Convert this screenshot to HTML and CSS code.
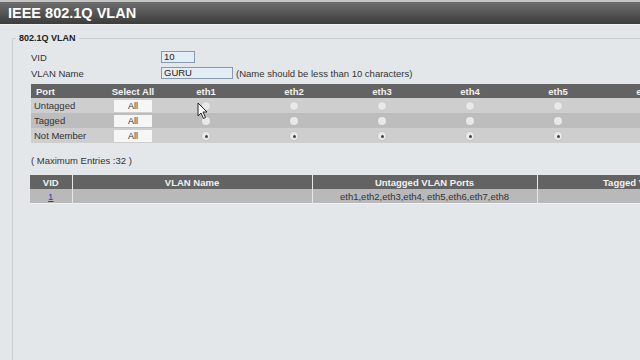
FILE: index.html
```html
<!DOCTYPE html>
<html>
<head>
<meta charset="utf-8">
<link rel="stylesheet" href="styles.css">
</head>
<body>
<div class="titlebar">IEEE 802.1Q VLAN</div>
<div class="content">
  <fieldset class="box">
    <legend>802.1Q VLAN</legend>
    <div class="inner">
    <div class="form">
      <div class="frow"><span class="flabel">VID</span><span class="input vid">10</span></div>
      <div class="frow"><span class="flabel">VLAN Name</span><span class="input name">GURU</span><span class="note">(Name should be less than 10 characters)</span></div>
    </div>
    <table class="ports">
      <colgroup><col class="c-port"><col class="c-sel"><col class="c-eth"><col class="c-eth"><col class="c-eth"><col class="c-eth"><col class="c-eth"><col class="c-eth"><col class="c-eth"><col class="c-eth"></colgroup>
      <thead>
        <tr><th class="lh">Port</th><th>Select All</th><th>eth1</th><th>eth2</th><th>eth3</th><th>eth4</th><th>eth5</th><th>eth6</th><th>eth7</th><th>eth8</th></tr>
      </thead>
      <tbody>
        <tr class="r1"><td class="lbl">Untagged</td><td><span class="btn">All</span></td><td><i class="radio"></i></td><td><i class="radio"></i></td><td><i class="radio"></i></td><td><i class="radio"></i></td><td><i class="radio"></i></td><td><i class="radio"></i></td><td><i class="radio"></i></td><td><i class="radio"></i></td></tr>
        <tr class="r2"><td class="lbl">Tagged</td><td><span class="btn">All</span></td><td><i class="radio"></i></td><td><i class="radio"></i></td><td><i class="radio"></i></td><td><i class="radio"></i></td><td><i class="radio"></i></td><td><i class="radio"></i></td><td><i class="radio"></i></td><td><i class="radio"></i></td></tr>
        <tr class="r1"><td class="lbl">Not Member</td><td><span class="btn">All</span></td><td><i class="radio on"></i></td><td><i class="radio on"></i></td><td><i class="radio on"></i></td><td><i class="radio on"></i></td><td><i class="radio on"></i></td><td><i class="radio on"></i></td><td><i class="radio on"></i></td><td><i class="radio on"></i></td></tr>
      </tbody>
    </table>
    <div class="max">( Maximum Entries :32 )</div>
    <table class="vlans">
      <colgroup><col class="v-id"><col class="v-name"><col class="v-unt"><col class="v-tag"></colgroup>
      <thead><tr><th>VID</th><th>VLAN Name</th><th>Untagged VLAN Ports</th><th>Tagged VLAN Ports</th></tr></thead>
      <tbody><tr><td><a class="vlink">1</a></td><td></td><td>eth1,eth2,eth3,eth4, eth5,eth6,eth7,eth8</td><td></td></tr></tbody>
    </table>
    </div>
  </fieldset>
</div>
<svg class="cursor" width="12" height="18" viewBox="0 0 12 18"><path d="M1 1 L1 14 L4 11 L6.5 16.5 L8.5 15.5 L6 10 L10 10 Z" fill="#fff" stroke="#222" stroke-width="1"/></svg>
</body>
</html>
```
FILE: styles.css
```css
html, body {
  margin: 0;
  padding: 0;
  width: 640px;
  height: 360px;
  overflow: hidden;
  background: #e3e7e9;
  font-family: "Liberation Sans", Arial, sans-serif;
  font-size: 9.5px;
  color: #333;
  position: relative;
}
.titlebar {
  height: 22px;
  border-top: 2px solid #c4c4c4;
  border-bottom: 1px solid #f4f4f4;
  background: linear-gradient(#6e6e6e, #3c3c3c);
  color: #fff;
  font-weight: bold;
  font-size: 14.5px;
  line-height: 22px;
  padding-left: 8px;
}
.content {
  padding: 8px 0 0 12px;
}
.box {
  margin: 0;
  padding: 0;
  border: 1px solid #cbcfd3;
  border-right: none;
  border-bottom: none;
  height: 340px;
  width: 900px;
  box-sizing: border-box;
}
.box legend {
  font-weight: bold;
  font-size: 9px;
  padding: 0 3px;
  margin-left: 3px;
  color: #222;
}
.inner {
  padding: 8px 0 0 18px;
}
.form {
  display: flex;
  flex-direction: column;
  gap: 4px;
}
.frow {
  display: flex;
  align-items: center;
  height: 12px;
}
.flabel {
  width: 130px;
}
.input {
  height: 10px;
  border: 1px solid #8a9aae;
  background: #e4ecf6;
  color: #222;
  line-height: 10px;
  padding-left: 2px;
  font-size: 9.5px;
}
.vid { width: 30px; }
.name { width: 68px; }
.note { margin-left: 3px; }
table {
  border-collapse: collapse;
  table-layout: fixed;
}
.ports {
  margin-top: 5px;
  width: 835px;
}
.c-port { width: 73px; }
.c-sel { width: 58px; }
.c-eth { width: 88px; }
th {
  background: #636363;
  color: #f2f2f2;
  font-weight: bold;
  font-size: 9.5px;
  height: 14px;
  padding: 0;
  text-align: center;
}
.ports th.lh { text-align: left; padding-left: 5px; }
.ports td {
  height: 15px;
  padding: 0;
  text-align: center;
}
.ports td.lbl { text-align: left; padding-left: 3px; }
.r1 td { background: #cecece; }
.r2 td { background: #bdbdbd; }
.btn {
  display: inline-block;
  width: 38px;
  height: 12px;
  line-height: 12px;
  background: #f6f6f6;
  color: #333;
  font-size: 9px;
  vertical-align: middle;
}
.radio {
  display: inline-block;
  width: 8px;
  height: 8px;
  border-radius: 50%;
  background: #e8e8e8;
  box-shadow: 0 0 0 0.5px #bdbdbd;
  vertical-align: middle;
  position: relative;
}
.radio.on::after {
  content: "";
  position: absolute;
  left: 2.5px;
  top: 2.5px;
  width: 3px;
  height: 3px;
  border-radius: 50%;
  background: #444;
}
.max {
  margin-top: 12px;
  height: 12px;
  line-height: 12px;
}
.vlans {
  margin-top: 8px;
  margin-left: -1px;
  width: 727px;
  border-bottom: 1px solid #f0f0f0;
}
.v-id { width: 42px; }
.v-name { width: 240px; }
.v-unt { width: 225px; }
.v-tag { width: 220px; }
.vlans th, .vlans td {
  border-left: 1px solid #e8e8e8;
}
.vlans th:first-child, .vlans td:first-child { border-left: none; }
.vlans td {
  background: #b9b9b9;
  height: 14px;
  padding: 0;
  text-align: center;
  font-size: 9.5px;
  color: #333;
}
.vlink {
  color: #3a3ab0;
  text-decoration: underline;
}
.cursor {
  position: absolute;
  left: 197px;
  top: 102px;
}
```
